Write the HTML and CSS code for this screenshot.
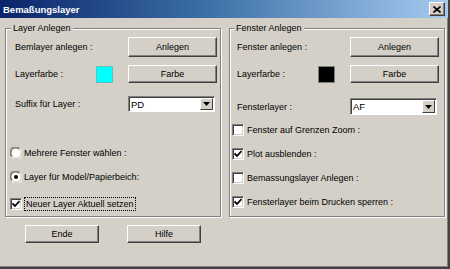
FILE: index.html
```html
<!DOCTYPE html>
<html>
<head>
<meta charset="utf-8">
<link rel="stylesheet" href="styles.css">
</head>
<body>
<div class="dialog">
  <div class="titlebar">
    <span class="title">Bemaßungslayer</span>
    <span class="close"><svg width="8" height="7" viewBox="0 0 8 7"><path d="M0.5 0.5 L7.5 6.5 M7.5 0.5 L0.5 6.5" stroke="#000" stroke-width="1.6"/></svg></span>
  </div>
  <div class="content">
    <div class="group g-left">
      <span class="legend">Layer Anlegen</span>
      <div class="row r1"><span class="label">Bemlayer anlegen :</span><span class="btn col3">Anlegen</span></div>
      <div class="row r2"><span class="label">Layerfarbe :</span><span class="swatch cyan"></span><span class="btn">Farbe</span></div>
      <div class="row r3 r3-left"><span class="label">Suffix für Layer :</span>
        <span class="combo col3"><span class="val">PD</span><span class="arrow"><svg width="7" height="4" viewBox="0 0 7 4"><path d="M0 0 H7 L3.5 4 Z" fill="#000"/></svg></span></span>
      </div>
      <div class="opt opt-first-left"><span class="radio"><svg width="12" height="12" viewBox="0 0 12 12"><circle cx="6" cy="6" r="5" fill="#fff"/><path d="M1.2 9.5 A5.5 5.5 0 0 1 9.5 1.2" stroke="#808080" fill="none"/><path d="M2.2 9 A4.5 4.5 0 0 1 9 2.2" stroke="#404040" fill="none"/><path d="M10.8 2.5 A5.5 5.5 0 0 1 2.5 10.8" stroke="#fff" fill="none"/><path d="M9.8 3 A4.5 4.5 0 0 1 3 9.8" stroke="#d4d0c8" fill="none"/></svg></span><span class="otext">Mehrere Fenster wählen :</span></div>
      <div class="opt opt-second"><span class="radio"><svg width="12" height="12" viewBox="0 0 12 12"><circle cx="6" cy="6" r="5" fill="#fff"/><path d="M1.2 9.5 A5.5 5.5 0 0 1 9.5 1.2" stroke="#808080" fill="none"/><path d="M2.2 9 A4.5 4.5 0 0 1 9 2.2" stroke="#404040" fill="none"/><path d="M10.8 2.5 A5.5 5.5 0 0 1 2.5 10.8" stroke="#fff" fill="none"/><path d="M9.8 3 A4.5 4.5 0 0 1 3 9.8" stroke="#d4d0c8" fill="none"/><circle cx="6" cy="6" r="2" fill="#000"/></svg></span><span class="otext">Layer für Model/Papierbeich:</span></div>
      <div class="opt opt-third"><span class="check"><svg width="8" height="8" viewBox="0 0 8 8"><path d="M0.5 3.5 L3 6 L7.5 1" stroke="#000" stroke-width="1.8" fill="none"/></svg></span><span class="otext focus">Neuer Layer Aktuell setzen</span></div>
    </div>
    <div class="group g-right">
      <span class="legend">Fenster Anlegen</span>
      <div class="row r1"><span class="label">Fenster anlegen :</span><span class="btn col3">Anlegen</span></div>
      <div class="row r2"><span class="label">Layerfarbe :</span><span class="swatch black"></span><span class="btn">Farbe</span></div>
      <div class="row r3 r3-right"><span class="label">Fensterlayer :</span>
        <span class="combo col3"><span class="val">AF</span><span class="arrow"><svg width="7" height="4" viewBox="0 0 7 4"><path d="M0 0 H7 L3.5 4 Z" fill="#000"/></svg></span></span>
      </div>
      <div class="opt opt-first-right"><span class="check"></span><span class="otext">Fenster auf Grenzen Zoom :</span></div>
      <div class="opt opt-next"><span class="check"><svg width="8" height="8" viewBox="0 0 8 8"><path d="M0.5 3.5 L3 6 L7.5 1" stroke="#000" stroke-width="1.8" fill="none"/></svg></span><span class="otext">Plot ausblenden :</span></div>
      <div class="opt opt-next"><span class="check"></span><span class="otext">Bemassungslayer Anlegen :</span></div>
      <div class="opt opt-next"><span class="check"><svg width="8" height="8" viewBox="0 0 8 8"><path d="M0.5 3.5 L3 6 L7.5 1" stroke="#000" stroke-width="1.8" fill="none"/></svg></span><span class="otext">Fensterlayer beim Drucken sperren :</span></div>
    </div>
  </div>
  <div class="buttons">
    <span class="btn big">Ende</span>
    <span class="btn big">Hilfe</span>
  </div>
</div>
</body>
</html>
```
FILE: styles.css
```css
html, body {
  margin: 0;
  padding: 0;
  background: #d4d0c8;
}
.dialog {
  width: 448px;
  height: 267px;
  background: #d4d0c8;
  border-right: 2px solid #404040;
  border-bottom: 2px solid #404040;
  box-shadow: inset -1px -1px 0 #808080;
  font-family: "Liberation Sans", Arial, sans-serif;
  font-size: 9px;
  color: #000;
  display: flex;
  flex-direction: column;
}
.titlebar {
  height: 18px;
  background: linear-gradient(to right, #0a246a 0%, #3a6ea5 45%, #a6caf0 100%);
  display: flex;
  align-items: center;
  justify-content: space-between;
  padding: 0 3px 0 3px;
}
.title {
  color: #fff;
  font-weight: bold;
  font-size: 9.5px;
}
.close {
  width: 14px;
  height: 12px;
  background: #d4d0c8;
  border-top: 1px solid #fff;
  border-left: 1px solid #fff;
  border-right: 1px solid #404040;
  border-bottom: 1px solid #404040;
  box-shadow: inset -1px -1px 0 #808080;
  display: flex;
  align-items: center;
  justify-content: center;
}
.content {
  display: flex;
  gap: 8px;
  padding: 10px 0 0 5px;
}
.group {
  position: relative;
  width: 214px;
  height: 179px;
  border: 1px solid #808080;
  box-shadow: 1px 1px 0 #fff, inset 1px 1px 0 #fff;
  padding-top: 8px;
  box-sizing: content-box;
  display: flex;
  flex-direction: column;
}
.legend {
  position: absolute;
  top: -6px;
  left: 5px;
  padding: 0 2px;
  background: #d4d0c8;
  line-height: 11px;
}
.g-right .legend {
  left: 4px;
}
.row {
  display: grid;
  grid-template-columns: 66px 17px 89px;
  column-gap: 15px;
  align-items: center;
}
.g-left .row {
  padding-left: 9px;
}
.g-right .row {
  padding-left: 7px;
}
.col3 {
  grid-column: 3;
}
.r1 {
  height: 20px;
}
.r2 {
  height: 18px;
  margin-top: 8px;
}
.r3-left {
  margin-top: 13px;
  height: 16px;
}
.r3-right {
  margin-top: 15px;
  height: 17px;
}
.label {
  white-space: nowrap;
}
.btn {
  box-sizing: border-box;
  height: 100%;
  background: #d4d0c8;
  border-top: 1px solid #fff;
  border-left: 1px solid #fff;
  border-right: 1px solid #404040;
  border-bottom: 1px solid #404040;
  box-shadow: inset -1px -1px 0 #808080;
  display: flex;
  align-items: center;
  justify-content: center;
}
.swatch {
  width: 17px;
  height: 17px;
  box-sizing: border-box;
  border: 1px solid #808080;
}
.cyan {
  background: #00ffff;
  border-color: #60c0c0;
}
.black {
  background: #000;
}
.combo {
  box-sizing: border-box;
  height: 100%;
  width: 87px;
  background: #fff;
  border-top: 1px solid #808080;
  border-left: 1px solid #808080;
  border-right: 1px solid #fff;
  border-bottom: 1px solid #fff;
  box-shadow: inset 1px 1px 0 #404040;
  display: flex;
  align-items: center;
  justify-content: space-between;
  padding: 1px 1px 1px 2px;
}
.val {
  font-size: 9.5px;
}
.arrow {
  box-sizing: border-box;
  width: 13px;
  height: 100%;
  background: #d4d0c8;
  border-top: 1px solid #fff;
  border-left: 1px solid #fff;
  border-right: 1px solid #404040;
  border-bottom: 1px solid #404040;
  display: flex;
  align-items: center;
  justify-content: center;
}
.opt {
  height: 14px;
  display: flex;
  align-items: center;
  white-space: nowrap;
}
.g-left .opt {
  padding-left: 4px;
}
.g-right .opt {
  padding-left: 2px;
}
.opt-first-left {
  margin-top: 34px;
}
.opt-second {
  margin-top: 10px;
}
.opt-third {
  margin-top: 13px;
}
.opt-first-right {
  margin-top: 8px;
}
.opt-next {
  margin-top: 10px;
}
.radio {
  width: 12px;
  height: 12px;
  display: flex;
  margin-right: 2px;
}
.check {
  box-sizing: border-box;
  width: 12px;
  height: 12px;
  background: #fff;
  border-top: 1px solid #808080;
  border-left: 1px solid #808080;
  border-right: 1px solid #fff;
  border-bottom: 1px solid #fff;
  box-shadow: inset 1px 1px 0 #404040, inset -1px -1px 0 #d4d0c8;
  display: flex;
  align-items: center;
  justify-content: center;
  margin-right: 3px;
}
.focus {
  border: 1px dotted #000;
  padding: 1px;
  margin-left: -1px;
}
.buttons {
  display: flex;
  gap: 28px;
  padding-left: 25px;
  margin-top: 8px;
}
.big {
  width: 74px;
  height: 18px;
}
```
